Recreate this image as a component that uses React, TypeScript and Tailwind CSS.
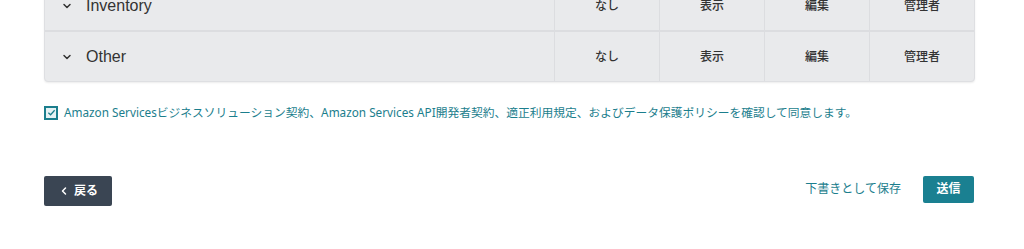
import { ChevronDown, ChevronLeft } from "lucide-react";

const rows = ["Inventory", "Other"];
const levels = ["なし", "表示", "編集", "管理者"];

export default function App() {
    return (
        <div className="w-[1024px] h-[249px] overflow-hidden bg-white font-['Noto_Sans','Noto_Sans_CJK_JP',sans-serif]">
            <div className="ml-[44px] w-[931px]">
                {/* Permissions table (top row scrolled off) */}
                <div className="-mt-[22px] rounded-[4px] bg-[#e9eaec] border border-[#dedfe2] shadow-[0_1px_2px_rgba(0,0,0,0.08)] overflow-hidden">
                    {rows.map((row, i) => (
                        <div
                            key={row}
                            className={`flex h-[51px] ${i > 0 ? "border-t-2 border-[#dcdde0]" : "pt-[3px]"}`}
                        >
                            <div className="flex flex-1 items-center pl-[16px] gap-[13px] text-[16px] text-[#333] font-['Liberation_Sans',sans-serif]">
                                <ChevronDown className="w-[12px] h-[12px] stroke-[3]" />
                                <span>{row}</span>
                            </div>
                            {levels.map((lv) => (
                                <div
                                    key={lv}
                                    className="w-[105px] flex items-center justify-center border-l border-[#dcdde0] text-[12px] font-medium text-[#333]"
                                >
                                    {lv}
                                </div>
                            ))}
                        </div>
                    ))}
                </div>

                {/* Agreement */}
                <label className="mt-[22px] flex items-center gap-[6px] text-[11.75px] text-[#1b7e8d]">
                    <span className="w-[14px] h-[14px] border-2 border-[#1b7e8d] bg-[#e6f2f4] flex items-center justify-center">
                        <svg viewBox="0 0 10 10" className="w-[9px] h-[9px]">
                            <path d="M1.5 5.2 L4 7.5 L8.5 2.5" fill="none" stroke="#1b7e8d" strokeWidth="1.4" />
                        </svg>
                    </span>
                    <span>
                        Amazon Servicesビジネスソリューション契約、Amazon Services API開発者契約、適正利用規定、およびデータ保護ポリシーを確認して同意します。
                    </span>
                </label>

                {/* Actions */}
                <div className="mt-[54px] mr-[1px] flex items-start justify-between">
                    <button className="h-[30px] w-[68px] rounded-[2px] bg-[#3a4553] text-white text-[12px] font-bold flex items-center justify-center gap-[4px]">
                        <ChevronLeft className="w-[12px] h-[12px] stroke-[3]" />
                        <span>戻る</span>
                    </button>
                    <div className="flex items-center gap-[22px]">
                        <button className="text-[12px] text-[#1b7e8d]">下書きとして保存</button>
                        <button className="h-[27px] w-[51px] rounded-[2px] bg-[#1a8091] text-white text-[12px] font-bold">
                            送信
                        </button>
                    </div>
                </div>
            </div>
        </div>
    );
}
